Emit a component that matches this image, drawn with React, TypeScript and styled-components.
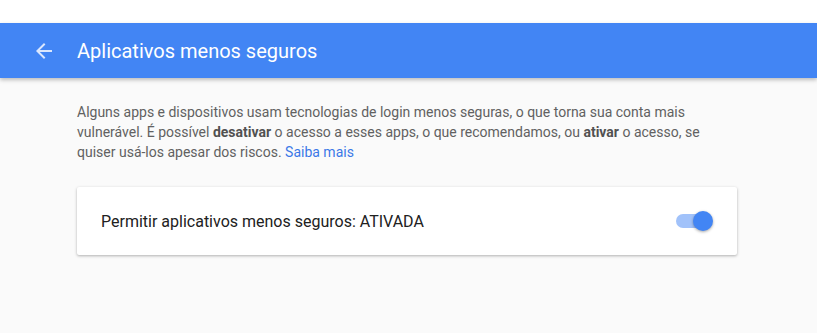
import React from 'react'
import styled, { createGlobalStyle } from 'styled-components'

const Global = createGlobalStyle`
  html, body {
    margin: 0;
    padding: 0;
    background: #fafafa;
    font-family: Roboto, "Liberation Sans", sans-serif;
  }
`

const Page = styled.div`
  min-height: 333px;
  background: #fafafa;
`

const TopStrip = styled.div`
  height: 23px;
  background: #ffffff;
`

const Header = styled.header`
  height: 55px;
  background: #4285f4;
  display: flex;
  align-items: center;
  padding-left: 34px;
  box-shadow: 0 2px 4px rgba(0, 0, 0, 0.25);
  position: relative;
  z-index: 1;
`

const BackButton = styled.button`
  width: 20px;
  height: 20px;
  padding: 0;
  margin-right: 23px;
  border: none;
  background: none;
  display: flex;
  align-items: center;
  justify-content: center;
  cursor: pointer;
`

const Title = styled.h1`
  margin: 0;
  font-size: 20px;
  font-weight: 400;
  color: #ffffff;
`

const Content = styled.main`
  width: 660px;
  margin-left: 77px;
  padding-top: 24px;
`

const Intro = styled.p`
  margin: 0;
  font-size: 14px;
  line-height: 20px;
  color: #616161;

  b {
    font-weight: 700;
    color: #515151;
  }

  a {
    color: #3b78e7;
    text-decoration: none;
  }
`

const Card = styled.div`
  margin-top: 25px;
  height: 68px;
  background: #ffffff;
  border-radius: 2px;
  box-shadow: 0 1px 3px rgba(0, 0, 0, 0.3);
  display: flex;
  align-items: center;
  justify-content: space-between;
  padding: 0 24px;
  box-sizing: border-box;
`

const Label = styled.span`
  font-size: 16px;
  color: #212121;
`

const Switch = styled.div<{ $on: boolean }>`
  position: relative;
  width: 34px;
  height: 14px;
  margin-right: 3px;
  border-radius: 7px;
  background: ${(p) => (p.$on ? '#a1c2fa' : '#bdbdbd')};
`

const Thumb = styled.span<{ $on: boolean }>`
  position: absolute;
  top: -3px;
  left: ${(p) => (p.$on ? '17px' : '-3px')};
  width: 20px;
  height: 20px;
  border-radius: 50%;
  background: ${(p) => (p.$on ? '#4285f4' : '#f1f1f1')};
  box-shadow: 0 1px 3px rgba(0, 0, 0, 0.35);
`

const App = () => {
  return (
    <Page>
      <Global />
      <TopStrip />
      <Header>
        <BackButton aria-label="Voltar">
          <svg width="16" height="16" viewBox="0 0 16 16">
            <path d="M16 7H3.83l5.59-5.59L8 0 0 8l8 8 1.41-1.41L3.83 9H16z" fill="#dbe7fd" />
          </svg>
        </BackButton>
        <Title>Aplicativos menos seguros</Title>
      </Header>
      <Content>
        <Intro>
          Alguns apps e dispositivos usam tecnologias de login menos seguras, o que torna sua conta mais
          vulnerável. É possível <b>desativar</b> o acesso a esses apps, o que recomendamos, ou <b>ativar</b> o
          acesso, se quiser usá-los apesar dos riscos. <a href="#">Saiba mais</a>
        </Intro>
        <Card>
          <Label>Permitir aplicativos menos seguros: ATIVADA</Label>
          <Switch $on>
            <Thumb $on />
          </Switch>
        </Card>
      </Content>
    </Page>
  )
}

export default App
